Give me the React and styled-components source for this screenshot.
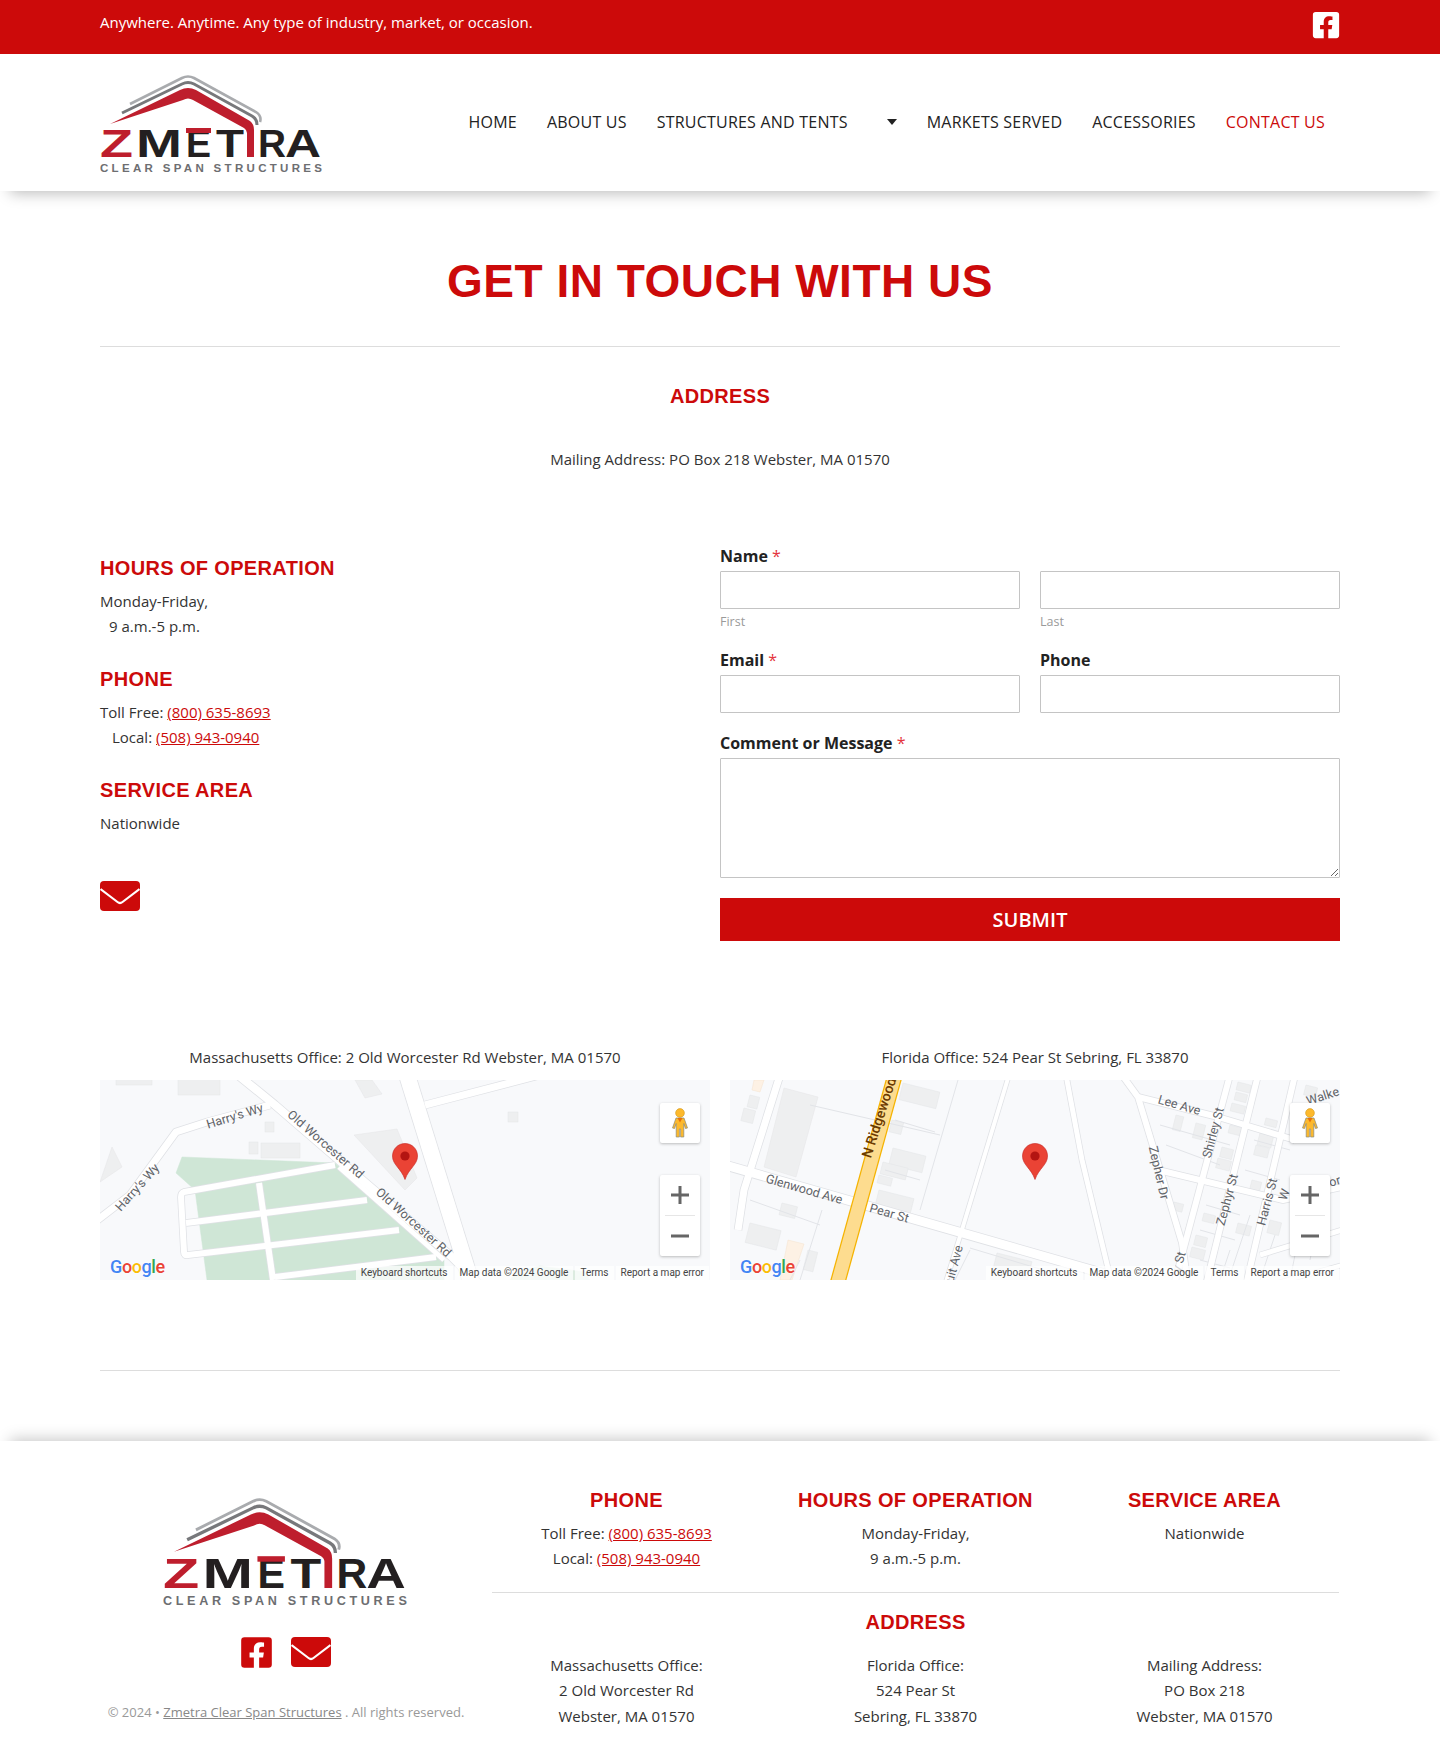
import React from 'react';
import styled, { createGlobalStyle } from 'styled-components';
import { FaFacebookSquare } from 'react-icons/fa';

const RED = '#cc0a0a';

const Global = createGlobalStyle`
  html, body { margin: 0; padding: 0; background: #fff; }
  body { font-family: "Open Sans", sans-serif; font-size: 15px; line-height: 25.5px; color: #333; }
  * { box-sizing: border-box; }
`;

const TopBar = styled.div`
  height: 54px; background: ${RED}; padding: 0 100px; display: flex; justify-content: space-between; align-items: flex-start;
  color: #fff; font-size: 15px;
`;
const TopText = styled.span` margin-top: 10px; line-height: 25px; `;
const TopIcon = styled.a` color: #fff; font-size: 30px; line-height: 0; margin: 10px -1px 0 0; `;

const Header = styled.header`
  position: relative; height: 137px; padding: 21px 100px 0; display: flex; justify-content: space-between; align-items: flex-start;
  background: #fff; box-shadow: 0 12px 14px -10px rgba(0,0,0,.28);
`;
const LogoSvg = styled.svg` display: block; width: ${p => p.$w}px; height: auto; `;
const Nav = styled.nav` display: flex; align-items: center; height: 60px; margin-top: 17px; padding-right: 15px; gap: 30px; `;
const NavLink = styled.a`
  font-size: 16px; font-weight: 500; letter-spacing: .22px; line-height: 24px; color: ${p => (p.$active ? RED : '#222')}; text-transform: uppercase; white-space: nowrap;
`;
const Caret = styled.span`
  width: 0; height: 0; border-left: 5.5px solid transparent; border-right: 5.5px solid transparent; border-top: 6px solid #222;
  margin-left: 9px;
`;

const Main = styled.main` padding: 0 100px; `;
const Title = styled.h1`
  margin: 60px 0 0; font: 700 46px/60px "Liberation Sans", sans-serif; color: ${RED}; text-align: center; text-transform: uppercase; letter-spacing: 0.5px;
`;
const Rule = styled.hr` border: 0; height: 1px; background: #ddd; margin: ${p => p.$m}; `;
const Heading = styled.h3`
  margin: ${p => p.$m || 0}; font: 700 20px/30px "Liberation Sans", sans-serif; letter-spacing: .35px; color: ${RED}; text-transform: uppercase;
  text-align: ${p => (p.$center ? 'center' : 'left')};
`;
const Para = styled.p`
  margin: ${p => p.$m || 0}; text-align: ${p => (p.$center ? 'center' : 'left')};
`;
const Indent = styled.span` display: inline-block; width: ${p => p.$w}px; `;
const Tel = styled.a` color: ${RED}; text-decoration: underline; `;

const Contact = styled.section` display: grid; grid-template-columns: 620px 620px; margin-top: 71px; `;
const InfoCol = styled.div` padding-top: 9px; `;
const MailIcon = styled.svg` display: block; flex: none; width: 40px; height: 30px; margin: ${p => p.$m || 0}; `;

const Form = styled.form` display: flex; flex-direction: column; `;
const FieldRow = styled.div` display: grid; grid-template-columns: 300px 300px; gap: 20px; margin-top: ${p => p.$mt || 0}px; `;
const MessageField = styled.div` margin-top: 18px; `;
const Label = styled.label` display: block; font-size: 16px; font-weight: 700; line-height: 24px; color: #222; margin-bottom: 3px; `;
const Star = styled.span` color: #e4343c; font-weight: 400; `;
const Input = styled.input`
  display: block; width: 100%; height: 38px; border: 1px solid #c4c4c4; border-radius: 1px; background: #fff; padding: 0; margin: 0;
`;
const Sub = styled.span` display: block; font-size: 12.5px; line-height: 18px; margin-top: 4px; color: #9a9a9a; `;
const Area = styled.textarea`
  display: block; width: 100%; height: 120px; border: 1px solid #c4c4c4; border-radius: 1px; background: #fff; padding: 0; margin: 0; resize: vertical;
`;
const Submit = styled.button`
  display: block; width: 100%; height: 43px; margin-top: 20px; border: 0; background: ${RED}; color: #fff;
  font: 600 20px/43px "Open Sans", sans-serif; text-transform: uppercase; padding: 0;
`;

const Maps = styled.section` display: grid; grid-template-columns: 610px 610px; gap: 20px; margin-top: 104px; `;
const Caption = styled.div` text-align: center; margin-bottom: 9.5px; `;
const MapFrame = styled.div` position: relative; width: 610px; height: 200px; overflow: hidden; background: #f8f9fb; `;
const MapSvg = styled.svg` display: block; width: 610px; height: 200px; `;
const Casing = styled.path` fill: none; stroke: ${p => p.$c || '#dfe1e5'}; stroke-width: ${p => p.$w + 1.5}; stroke-linejoin: round; stroke-linecap: butt; `;
const Fill = styled.path` fill: none; stroke: ${p => p.$c || '#fff'}; stroke-width: ${p => p.$w}; stroke-linejoin: round; stroke-linecap: butt; `;
const Thin = styled.path` fill: none; stroke: #e2e4e8; stroke-width: 1; `;
const Building = styled.rect` fill: ${p => p.$c || '#eeeff0'}; stroke: #e4e5e7; stroke-width: .5; `;
const Lot = styled.polygon` fill: ${p => p.$c || '#eeeff0'}; stroke: ${p => p.$s || '#e4e5e7'}; stroke-width: .5; `;
const RoadLabel = styled.text` font: 400 12.5px "Roboto", sans-serif; fill: #5f6368; text-anchor: middle; dominant-baseline: middle; `;
const HighwayLabel = styled.text` font: 500 14px "Roboto", sans-serif; fill: #6b3a00; text-anchor: middle; dominant-baseline: middle; `;

const Pegman = styled.div`
  position: absolute; top: 23px; right: 10px; width: 40px; height: 40px; background: #fff; box-shadow: 0 1px 3px rgba(0,0,0,.25);
  display: flex; align-items: center; justify-content: center; border-radius: 2px;
`;
const ZoomBox = styled.div`
  position: absolute; top: 95px; right: 10px; width: 40px; height: 81px; background: #fff; box-shadow: 0 1px 3px rgba(0,0,0,.25);
  border-radius: 2px; display: flex; flex-direction: column;
`;
const ZoomBtn = styled.div` height: 40px; display: flex; align-items: center; justify-content: center; `;
const ZoomLine = styled.div` height: 1px; background: #e6e6e6; margin: 0 5px; `;
const Pin = styled.svg` position: absolute; left: 292px; top: 63px; width: 26px; height: 37px; `;
const GoogleMark = styled.div`
  position: absolute; left: 10px; bottom: 2px; font: 500 18px/22px "Roboto", sans-serif; letter-spacing: -.4px;
  text-shadow: 0 0 2px #fff;
`;
const Letter = styled.span` color: ${p => p.$c}; `;
const Attribution = styled.div`
  position: absolute; right: 1px; bottom: 0; height: 14px; display: flex; font: 400 10px/14px "Roboto", sans-serif; color: #444;
`;
const AttrItem = styled.span` background: rgba(255,255,255,.72); padding: 0 5px; margin-left: 2px; white-space: nowrap; `;

const Footer = styled.footer`
  position: relative; display: grid; grid-template-columns: 372px 848px; gap: 20px; padding: 44px 100px 20px;
  background: #fff; box-shadow: 0 -12px 14px -10px rgba(0,0,0,.22); margin-top: 70px;
`;
const FootBrand = styled.div` display: flex; flex-direction: column; align-items: center; padding-top: 13px; `;
const FootIcons = styled.div` display: flex; align-items: flex-start; gap: 20px; margin-top: 32px; color: ${RED}; `;
const FootFb = styled.span`
  font-size: 35px; line-height: 0; width: 30.6px; height: 30px; display: flex; justify-content: center; flex: none;
  & > svg { flex: none; margin-top: -2.2px; }
`;
const Copy = styled.p` margin: 33px 0 0; font-size: 13px; color: #999; white-space: nowrap; `;
const CopyLink = styled.a` color: #888; text-decoration: underline; `;
const FootCols = styled.div` display: grid; grid-template-columns: repeat(3, 269px); gap: 0 20px; `;
const FootCol = styled.div` text-align: center; `;
const FootBody = styled.p` margin: ${p => p.$m}; `;
const FullRow = styled.div` grid-column: 1 / -1; `;

const logoLetters = [
  ['Z', 0, 33, '#be1e2d'],
  ['M', 36, 46, '#231f20'],
  ['E', 86, 25, '#231f20'],
  ['T', 116, 28, '#231f20'],
  ['R', 158, 28, '#231f20'],
  ['A', 185, 36, '#231f20'],
];

const Logo = ({ w }) => (
  <LogoSvg $w={w} viewBox="0 0 224 98" role="img" aria-label="Zmetra Clear Span Structures">
    <path d="M30 29 L82 3 Q88 0 94 3 L156 37 Q162 41 160 47" fill="none" stroke="#a9abae" strokeWidth="2.6" />
    <path d="M22 38 L82 9 Q88 6 94 9 L152 41 Q157 44 157 50" fill="none" stroke="#77787b" strokeWidth="3" />
    <path d="M10 49 L80 15 Q88 11 96 15 L150 46 Q154 49 154 55 L154 82 L147 82 L147 58 Q147 55 144 53 L93 25 Q88 22 83 25 Z" fill="#be1e2d" />
    {logoLetters.map(([ch, x, len, fill]) => (
      <text key={ch} x={x} y="82" fontFamily='"Liberation Sans", sans-serif' fontWeight="700" fontSize="39" textLength={len} lengthAdjust="spacingAndGlyphs" fill={fill}>{ch}</text>
    ))}
    <rect x="86" y="53" width="25" height="5" fill="#be1e2d" />
    <text x="0" y="97" fontFamily='"Liberation Sans", sans-serif' fontWeight="700" fontSize="11.5" textLength="222" lengthAdjust="spacing" fill="#6d6e71">CLEAR SPAN STRUCTURES</text>
  </LogoSvg>
);

const Envelope = ({ m }) => (
  <MailIcon $m={m} viewBox="0 0 40 30">
    <rect width="40" height="30" rx="4" fill={RED} />
    <path d="M0.5 8 L17.5 21 Q20 23 22.5 21 L39.5 8" fill="none" stroke="#fff" strokeWidth="2.2" />
  </MailIcon>
);

const Road = ({ d, w }) => <Casing d={d} $w={w} />;
const RoadTop = ({ d, w }) => <Fill d={d} $w={w} />;

const roads1 = [
  ['M138 -5 L175 25 L247 87 L352 177 L380 205', 8],
  ['M307 -5 L372 205', 16],
  ['M325 25 L440 -5', 7],
  ['M-5 142 L30 115 L76 52 L107 42 L170 25', 7],
];
const grid1 = [
  ['M235 85 L84 112 Q81 113 81 117 L84 172 Q84 176 88 175 L299 150', 6],
  ['M86 143 L267 120', 6],
  ['M239 87 L344 180', 5],
  ['M159 103 L173 200', 6],
  ['M175 197 L336 177', 6],
];

const Map1 = () => (
  <MapSvg viewBox="0 0 610 200">
    <Lot points="82,77 235,83 344,180 344,200 107,200 95,110 76,93" $c="#cfe6d6" $s="#cfe6d6" />
    <Lot points="416,192 440,186 485,192 490,200 410,200" $c="#dcebe0" $s="#dcebe0" />
    <Lot points="0,102 12,67 22,87" />
    <Building x="78" y="-2" width="42" height="17" />
    <Building x="16" y="-2" width="36" height="7" />
    <Lot points="255,0 272,0 282,14 265,18" />
    <Lot points="254,55 297,49 317,98 305,110" />
    <Building x="161" y="63" width="39" height="15" />
    <Building x="149" y="62" width="9" height="12" />
    <Building x="165" y="42" width="9" height="10" />
    <Building x="408" y="32" width="10" height="10" />
    {[...roads1, ...grid1].map(([d, w]) => <Road key={d} d={d} w={w} />)}
    {[...roads1, ...grid1].map(([d, w]) => <RoadTop key={d} d={d} w={w} />)}
    <RoadLabel x="135" y="37" transform="rotate(-17 135 37)">Harry's Wy</RoadLabel>
    <RoadLabel x="38" y="108" transform="rotate(-48 38 108)">Harry's Wy</RoadLabel>
    <RoadLabel x="225" y="65" transform="rotate(41 225 65)">Old Worcester Rd</RoadLabel>
    <RoadLabel x="313" y="143" transform="rotate(42 313 143)">Old Worcester Rd</RoadLabel>
  </MapSvg>
);

const roads2 = [
  ['M-5 85 L372 193 L400 203', 9],
  ['M50 -5 L14 110 L8 150', 7],
  ['M392 -5 L408 17 L428 83 L452 163 L458 205', 6],
  ['M408 17 L488 37 L565 60', 6],
  ['M500 -5 L444 205', 6],
  ['M528 -5 L476 205', 6],
  ['M565 -5 L516 205', 6],
  ['M428 90 L553 120 L612 107', 6],
  ['M530 175 L612 150', 5],
  ['M540 205 L612 185', 4],
  ['M279 -5 L231 153 L215 205', 4],
  ['M336 -5 L352 80 L382 205', 5],
];
const houses2 = [
  [173, 3, 38, 17], [162, 40, 12, 12], [163, 68, 34, 17], [153, 82, 26, 12], [149, 95, 14, 8], [149, 110, 36, 20],
  [52, 123, 16, 12], [20, 143, 32, 20], [78, 170, 10, 20], [267, 173, 36, 27], [20, 15, 10, 12], [14, 28, 12, 13],
  [446, 35, 8, 15], [466, 43, 10, 15], [500, 45, 14, 8], [492, 67, 12, 10], [488, 78, 14, 10], [508, 2, 14, 8], [506, 12, 12, 8],
  [502, 23, 14, 8], [536, 38, 12, 7], [530, 53, 14, 12], [526, 65, 14, 10], [522, 100, 10, 10], [444, 122, 10, 8], [474, 133, 12, 8],
  [508, 143, 14, 10], [540, 140, 12, 13], [466, 155, 12, 10], [462, 167, 14, 10], [576, 5, 12, 10],
];
const parcels2 = [
  'M80 25 L210 55', 'M165 40 L205 52', 'M155 90 L190 100', 'M145 125 L185 135', 'M20 120 L90 145', 'M70 180 L60 200',
  'M228 0 L190 130', 'M130 130 L105 200', 'M92 130 L70 200', 'M240 170 L225 200', 'M240 168 L330 195',
  'M430 45 L500 65', 'M436 65 L490 85', 'M470 100 L450 170', 'M476 125 L510 135', 'M470 150 L505 160', 'M470 180 L500 188',
  'M524 60 L560 70', 'M515 90 L550 100', 'M500 170 L490 200', 'M520 135 L500 195', 'M545 155 L530 200', 'M570 150 L560 200', 'M590 130 L580 180',
];

const Map2 = () => (
  <MapSvg viewBox="0 0 610 200">
    <Lot points="54,8 88,17 66,97 34,87" $c="#eeeff0" />
    <Lot points="24,0 34,0 30,12 22,10" $c="#fdf1e4" $s="#f5e3cf" />
    <Lot points="58,160 74,164 62,200 50,200" $c="#fdf1e4" $s="#f5e3cf" />
    {houses2.map(([x, y, w, h]) => <Building key={`${x}-${y}`} x={x} y={y} width={w} height={h} transform={`rotate(14 ${x} ${y})`} />)}
    {parcels2.map(d => <Thin key={d} d={d} />)}
    {roads2.map(([d, w]) => <Road key={d} d={d} w={w} />)}
    {roads2.map(([d, w]) => <RoadTop key={d} d={d} w={w} />)}
    <Casing d="M165 -5 L107 205" $w={14} $c="#f5b301" />
    <Fill d="M165 -5 L107 205" $w={13} $c="#fddc8f" />
    <HighwayLabel x="150" y="38" transform="rotate(-72 150 38)">N Ridgewood</HighwayLabel>
    <RoadLabel x="74" y="110" transform="rotate(16 74 110)">Glenwood Ave</RoadLabel>
    <RoadLabel x="159" y="134" transform="rotate(16 159 134)">Pear St</RoadLabel>
    <RoadLabel x="225" y="184" transform="rotate(-75 225 184)">uit Ave</RoadLabel>
    <RoadLabel x="449" y="26" transform="rotate(16 449 26)">Lee Ave</RoadLabel>
    <RoadLabel x="484" y="53" transform="rotate(-75 484 53)">Shirley St</RoadLabel>
    <RoadLabel x="428" y="93" transform="rotate(77 428 93)">Zepher Dr</RoadLabel>
    <RoadLabel x="498" y="120" transform="rotate(-75 498 120)">Zephyr St</RoadLabel>
    <RoadLabel x="538" y="122" transform="rotate(-75 538 122)">Harris St</RoadLabel>
    <RoadLabel x="593" y="17" transform="rotate(-18 593 17)">Walke</RoadLabel>
    <RoadLabel x="450" y="182" transform="rotate(-75 450 182)">y St</RoadLabel>
    <RoadLabel x="555" y="115" transform="rotate(-70 555 115)">W</RoadLabel>
    <RoadLabel x="605" y="102" transform="rotate(-15 605 102)">or</RoadLabel>
  </MapSvg>
);

const MapChrome = () => (
  <>
    <Pin viewBox="0 0 26 37">
      <path d="M13 0.5 C6 0.5 .5 6 .5 13 C.5 22 9 25 13 36.5 C17 25 25.5 22 25.5 13 C25.5 6 20 .5 13 .5 Z" fill="#ea4335" stroke="#c5221f" strokeWidth=".6" />
      <circle cx="13" cy="13" r="4.6" fill="#b31412" />
    </Pin>
    <Pegman>
      <svg width="18" height="30" viewBox="0 0 18 30">
        <circle cx="9" cy="5" r="4.4" fill="#fdb92c" stroke="#c98a00" strokeWidth=".5" />
        <path d="M5 10 H13 L16.5 20 L14.5 20.5 L12.8 15.5 V29 H9.6 V21 H8.4 V29 H5.2 V15.5 L3.5 20.5 L1.5 20 Z" fill="#fdb92c" stroke="#8a8a7a" strokeWidth=".7" />
        <path d="M6.5 10 L9 14.5 L11.5 10 Z" fill="#e8710a" />
      </svg>
    </Pegman>
    <ZoomBox>
      <ZoomBtn>
        <svg width="18" height="18" viewBox="0 0 18 18"><path d="M7.5 0 H10.5 V7.5 H18 V10.5 H10.5 V18 H7.5 V10.5 H0 V7.5 H7.5 Z" fill="#666" /></svg>
      </ZoomBtn>
      <ZoomLine />
      <ZoomBtn>
        <svg width="18" height="18" viewBox="0 0 18 18"><rect y="7.5" width="18" height="3" fill="#666" /></svg>
      </ZoomBtn>
    </ZoomBox>
    <GoogleMark>
      <Letter $c="#4285f4">G</Letter><Letter $c="#ea4335">o</Letter><Letter $c="#fbbc04">o</Letter><Letter $c="#4285f4">g</Letter><Letter $c="#34a853">l</Letter><Letter $c="#ea4335">e</Letter>
    </GoogleMark>
    <Attribution>
      <AttrItem>Keyboard shortcuts</AttrItem>
      <AttrItem>Map data ©2024 Google</AttrItem>
      <AttrItem>Terms</AttrItem>
      <AttrItem>Report a map error</AttrItem>
    </Attribution>
  </>
);

export default function App() {
  return (
    <>
      <Global />
      <TopBar>
        <TopText>Anywhere. Anytime. Any type of industry, market, or occasion.</TopText>
        <TopIcon aria-label="Facebook"><FaFacebookSquare /></TopIcon>
      </TopBar>
      <Header>
        <Logo w={224} />
        <Nav>
          <NavLink>Home</NavLink>
          <NavLink>About Us</NavLink>
          <NavLink>Structures and Tents</NavLink>
          <Caret />
          <NavLink>Markets Served</NavLink>
          <NavLink>Accessories</NavLink>
          <NavLink $active>Contact Us</NavLink>
        </Nav>
      </Header>
      <Main>
        <Title>Get in touch with us</Title>
        <Rule $m="35px 0 0" />
        <Heading $center $m="34px 0 0">Address</Heading>
        <Para $center $m="36px 0 0">Mailing Address: PO Box 218 Webster, MA 01570</Para>
        <Contact>
          <InfoCol>
            <Heading>Hours of Operation</Heading>
            <Para $m="6px 0 0">Monday-Friday,<br /><Indent $w={9} />9 a.m.-5 p.m.</Para>
            <Heading $m="24px 0 0">Phone</Heading>
            <Para $m="6px 0 0">Toll Free: <Tel>(800) 635-8693</Tel><br /><Indent $w={12} />Local: <Tel>(508) 943-0940</Tel></Para>
            <Heading $m="24px 0 0">Service Area</Heading>
            <Para $m="6px 0 0">Nationwide</Para>
            <Envelope m="45px 0 0" />
          </InfoCol>
          <Form>
            <FieldRow>
              <div>
                <Label>Name <Star>*</Star></Label>
                <Input />
                <Sub>First</Sub>
              </div>
              <div>
                <Label>&nbsp;</Label>
                <Input />
                <Sub>Last</Sub>
              </div>
            </FieldRow>
            <FieldRow $mt={17}>
              <div>
                <Label>Email <Star>*</Star></Label>
                <Input />
              </div>
              <div>
                <Label>Phone</Label>
                <Input />
              </div>
            </FieldRow>
            <MessageField>
              <Label>Comment or Message <Star>*</Star></Label>
              <Area />
            </MessageField>
            <Submit type="button">Submit</Submit>
          </Form>
        </Contact>
        <Maps>
          <div>
            <Caption>Massachusetts Office: 2 Old Worcester Rd Webster, MA 01570</Caption>
            <MapFrame><Map1 /><MapChrome /></MapFrame>
          </div>
          <div>
            <Caption>Florida Office: 524 Pear St Sebring, FL 33870</Caption>
            <MapFrame><Map2 /><MapChrome /></MapFrame>
          </div>
        </Maps>
        <Rule $m="90px 0 0" />
      </Main>
      <Footer>
        <FootBrand>
          <Logo w={246} />
          <FootIcons>
            <FootFb><FaFacebookSquare /></FootFb>
            <Envelope />
          </FootIcons>
          <Copy>© 2024 • <CopyLink>Zmetra Clear Span Structures</CopyLink> . All rights reserved.</Copy>
        </FootBrand>
        <FootCols>
          <FootCol>
            <Heading $center>Phone</Heading>
            <FootBody $m="6px 0 0">Toll Free: <Tel>(800) 635-8693</Tel><br />Local: <Tel>(508) 943-0940</Tel></FootBody>
          </FootCol>
          <FootCol>
            <Heading $center>Hours of Operation</Heading>
            <FootBody $m="6px 0 0">Monday-Friday,<br />9 a.m.-5 p.m.</FootBody>
          </FootCol>
          <FootCol>
            <Heading $center>Service Area</Heading>
            <FootBody $m="6px 0 0">Nationwide</FootBody>
          </FootCol>
          <FullRow>
            <Rule $m="20px 0 0" />
            <Heading $center $m="14px 0 0">Address</Heading>
          </FullRow>
          <FootCol>
            <FootBody $m="16px 0 0">Massachusetts Office:<br />2 Old Worcester Rd<br />Webster, MA 01570</FootBody>
          </FootCol>
          <FootCol>
            <FootBody $m="16px 0 0">Florida Office:<br />524 Pear St<br />Sebring, FL 33870</FootBody>
          </FootCol>
          <FootCol>
            <FootBody $m="16px 0 0">Mailing Address:<br />PO Box 218<br />Webster, MA 01570</FootBody>
          </FootCol>
        </FootCols>
      </Footer>
    </>
  );
}
